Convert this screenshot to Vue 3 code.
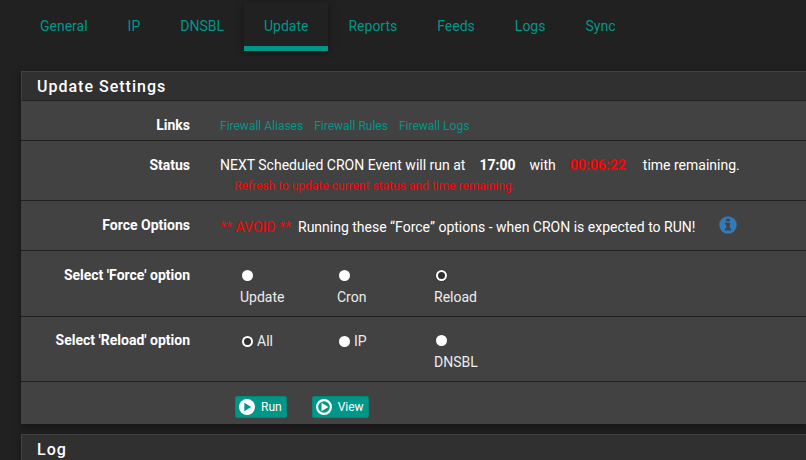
<script setup>
import { ref } from 'vue'

const tabs = ['General', 'IP', 'DNSBL', 'Update', 'Reports', 'Feeds', 'Logs', 'Sync']
const activeTab = ref('Update')
const links = ['Firewall Aliases', 'Firewall Rules', 'Firewall Logs']

const forceOptions = ['Update', 'Cron', 'Reload']
const reloadOptions = ['All', 'IP', 'DNSBL']
const force = ref('Reload')
const reload = ref('All')
</script>

<template>
  <div class="page">
    <nav class="tabs">
      <a
        v-for="tab in tabs"
        :key="tab"
        href="#"
        class="tab"
        :class="{ active: tab === activeTab }"
        @click.prevent="activeTab = tab"
      >{{ tab }}</a>
    </nav>

    <main class="panels">
      <section class="panel">
        <h2 class="panel-title">Update Settings</h2>

        <div class="row">
          <span class="row-label">Links</span>
          <div class="links small">
            <a v-for="link in links" :key="link" href="#">{{ link }}</a>
          </div>
        </div>

        <div class="row">
          <span class="row-label">Status</span>
          <div>
            <p class="status">
              <span>NEXT Scheduled CRON Event will run at</span>
              <strong>17:00</strong>
              <span>with</span>
              <strong class="remaining">00:06:22</strong>
              <span>time remaining.</span>
            </p>
            <p class="hint small">Refresh to update current status and time remaining.</p>
          </div>
        </div>

        <div class="row">
          <span class="row-label">Force Options</span>
          <div class="warning">
            <p><span class="avoid">** AVOID **</span>&nbsp; Running these “Force” options - when CRON is expected to RUN!</p>
            <button type="button" class="info">
              <svg viewBox="0 0 18 18" width="18" height="18" aria-hidden="true">
                <circle cx="9" cy="9" r="8.7" fill="#337ab7" />
                <path d="M7.3 2.7h3.4v2.7H7.3zM6.1 6.7h4.7v5.7h1.3v2H6v-2h1.3V8.7H6.1z" fill="#424242" />
              </svg>
            </button>
          </div>
        </div>

        <div class="row choices-row" role="radiogroup" aria-labelledby="force-label">
          <span id="force-label" class="row-label">Select 'Force' option</span>
          <div class="choices">
            <label v-for="option in forceOptions" :key="option" class="choice">
              <input v-model="force" type="radio" name="force" :value="option" :class="{ focused: option === 'Reload' }">
              <span>{{ option }}</span>
            </label>
          </div>
        </div>

        <div class="row choices-row" role="radiogroup" aria-labelledby="reload-label">
          <span id="reload-label" class="row-label">Select 'Reload' option</span>
          <div class="choices">
            <label v-for="option in reloadOptions" :key="option" class="choice">
              <input v-model="reload" type="radio" name="reload" :value="option">
              <span>{{ option }}</span>
            </label>
          </div>
        </div>

        <div class="row">
          <span class="row-label"></span>
          <div class="actions">
            <button type="button" class="btn">
              <svg viewBox="0 0 16 16" width="16" height="16" aria-hidden="true">
                <circle cx="8" cy="8" r="8" fill="#fff" />
                <path d="M5.3 3.8 12.2 8l-6.9 4.2z" fill="#009688" />
              </svg>
              <span>Run</span>
            </button>
            <button type="button" class="btn">
              <svg viewBox="0 0 16 16" width="16" height="16" aria-hidden="true">
                <circle cx="8" cy="8" r="6.9" fill="none" stroke="#fff" stroke-width="2.2" />
                <path d="M5.5 3.8 12.4 8l-6.9 4.2z" fill="#fff" />
              </svg>
              <span>View</span>
            </button>
          </div>
        </div>
      </section>

      <section class="panel">
        <h2 class="panel-title">Log</h2>
      </section>
    </main>
  </div>
</template>

<style>
body {
  margin: 0;
  background: #212121;
}
html {
  overflow: hidden;
}
</style>

<style scoped>
.page {
  color: #fff;
  font: 14px/20px Roboto, "Liberation Sans", sans-serif;
}
a {
  color: #009688;
  text-decoration: none;
}
p {
  margin: 0;
}
.tabs {
  display: flex;
  padding: 2px 20px 0;
}
.tab {
  padding: 14px 20px 10px;
  border-bottom: 5px solid transparent;
}
.tab.active {
  border-bottom-color: #009688;
  box-shadow: 0 2px 8px rgba(0, 0, 0, 0.4);
}
.panels {
  display: flex;
  flex-direction: column;
  gap: 10px;
  padding: 20px 0 0 21px;
}
.panel {
  background: #424242;
  box-shadow: 0 3px 8px rgba(0, 0, 0, 0.4);
}
.panel-title {
  margin: 0;
  padding: 5px 15px 4px;
  border: 1px solid #424242;
  border-right: 0;
  border-bottom-color: #212121;
  background: #303030;
  font-size: 16px;
  font-weight: 500;
  line-height: 19px;
  letter-spacing: 1px;
}
.row {
  display: grid;
  grid-template-columns: 169px minmax(0, 1fr);
  column-gap: 30px;
  padding: 14px 0 5px;
  white-space: nowrap;
}
.row + .row {
  border-top: 1px solid #212121;
}
.row-label {
  font-weight: 700;
  text-align: right;
}
.small {
  padding-top: 2px;
  font-size: 12px;
  line-height: 18px;
}
.links {
  display: flex;
  gap: 11px;
}
.status {
  display: flex;
  gap: 14px;
}
.remaining,
.avoid,
.hint {
  color: #f00;
}
.remaining {
  margin-right: 3px;
}
.hint {
  padding-left: 14px;
}
.warning {
  display: flex;
  align-items: flex-start;
  gap: 23px;
  padding-bottom: 8px;
}
.warning p {
  padding-top: 2px;
}
.info {
  height: 20px;
  padding: 0 0 0 1px;
  border: 0;
  background: none;
}
.info svg {
  display: block;
}
.choices-row {
  padding-bottom: 8px;
}
.choices-row + .choices-row {
  padding-top: 13px;
}
.choices {
  display: flex;
  gap: 57px;
  padding-left: 20px;
}
.choice {
  display: flex;
  flex-wrap: wrap;
  align-items: center;
  align-content: flex-start;
  gap: 0 4px;
  width: 40px;
  color: #ececec;
  line-height: 22px;
}
.choice input {
  appearance: none;
  width: 11px;
  height: 11px;
  margin: 5px 0 5px 2px;
  border: 2px solid #fff;
  border-radius: 50%;
  background: #fff;
}
.choice input:checked {
  background: #303030;
}
.choice input.focused {
  outline: 1px dotted #303030;
  outline-offset: 0;
}
.actions {
  display: flex;
  gap: 25px;
  padding: 0 0 1px 15px;
}
.btn {
  display: flex;
  align-items: center;
  gap: 6px;
  height: 22px;
  padding: 0 4px 0 3px;
  border: 1px solid #00877a;
  border-radius: 2px;
  background: #009688;
  color: #fff;
  font: 12px/18px Roboto, "Liberation Sans", sans-serif;
}
</style>
